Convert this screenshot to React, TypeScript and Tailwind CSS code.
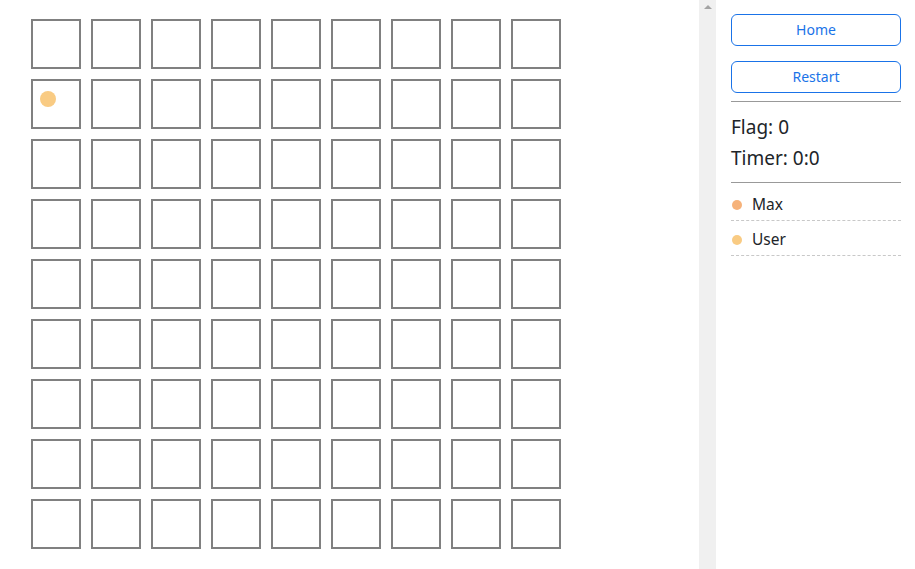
const SIZE = 9

const players = [
  { name: 'Max', color: 'bg-[#f6b27a]' },
  { name: 'User', color: 'bg-[#f9cb83]' },
]

const Cell = ({ hasUser }: { hasUser: boolean }) => (
  <div className="relative w-[50px] h-[50px] border-2 border-[#808080] bg-white">
    {hasUser && (
      <span className="absolute left-[7px] top-[10px] w-[16px] h-[16px] rounded-full bg-[#f9cb83]" />
    )}
  </div>
)

const Board = () => (
  <div className="grid grid-cols-9 gap-[10px] w-max">
    {Array.from({ length: SIZE * SIZE }).map((_, i) => (
      <Cell key={i} hasUser={i === SIZE} />
    ))}
  </div>
)

const Sidebar = () => (
  <aside className="flex-1 pl-[15px] pr-[14px] pt-[14px] text-[#212529]">
    <button className="block w-full h-[32px] pb-[2px] rounded-[6px] border border-[#1a73e8] text-[14px] text-[#1a73e8]">
      Home
    </button>
    <button className="block w-full h-[32px] pb-[2px] mt-[15px] rounded-[6px] border border-[#1a73e8] text-[14px] text-[#1a73e8]">
      Restart
    </button>
    <div className="mt-[8px] border-t border-[#999] h-px bg-[#ddd]" />
    <div className="pt-[10px] text-[19px] leading-[31px]">
      <div>Flag: 0</div>
      <div>Timer: 0:0</div>
    </div>
    <div className="mt-[8px] border-t border-[#999]" />
    <ul className="mt-[3px]">
      {players.map((p) => (
        <li
          key={p.name}
          className="flex items-center h-[35px] pt-[3px] border-b border-dashed border-[#c8c8c8] text-[15.5px]"
        >
          <span className={`w-[10px] h-[10px] rounded-full ml-[1px] ${p.color}`} />
          <span className="ml-[10px]">{p.name}</span>
        </li>
      ))}
    </ul>
  </aside>
)

export default function App() {
  return (
    <div className="flex h-[569px] w-[915px] bg-white font-['Noto_Sans',sans-serif] overflow-hidden">
      <div className="flex w-[716px]">
        <main className="flex-1 pl-[31px] pt-[19px]">
          <Board />
        </main>
        <div className="w-[17px] bg-[#f0f0f0] flex justify-center pt-[5px]">
          <span className="w-0 h-0 border-l-[4px] border-r-[4px] border-b-[4px] border-l-transparent border-r-transparent border-b-[#a3a3a3]" />
        </div>
      </div>
      <Sidebar />
    </div>
  )
}
